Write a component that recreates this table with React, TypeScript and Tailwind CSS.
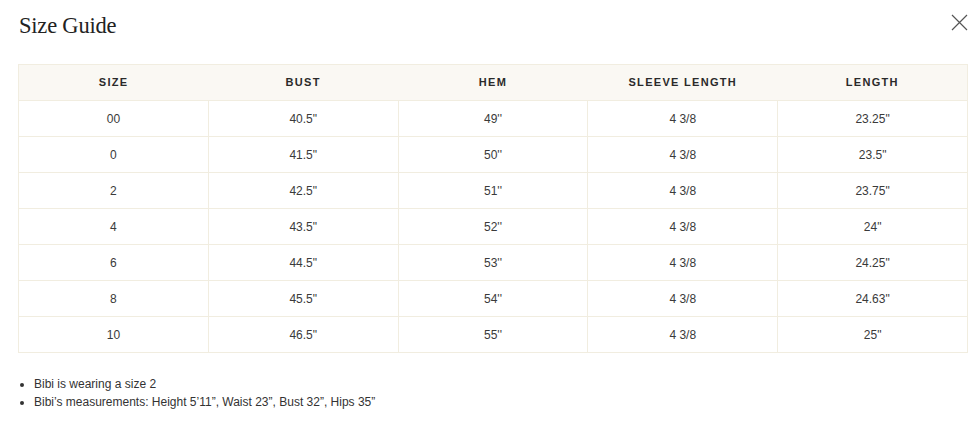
import React from 'react';

const rows: [string, string, string, string, string][] = [
  ['00', '40.5"', '49\'\'', '4 3/8', '23.25"'],
  ['0', '41.5"', '50\'\'', '4 3/8', '23.5"'],
  ['2', '42.5"', '51\'\'', '4 3/8', '23.75"'],
  ['4', '43.5"', '52\'\'', '4 3/8', '24"'],
  ['6', '44.5"', '53\'\'', '4 3/8', '24.25"'],
  ['8', '45.5"', '54\'\'', '4 3/8', '24.63"'],
  ['10', '46.5"', '55\'\'', '4 3/8', '25"'],
];

const headers = ['Size', 'Bust', 'Hem', 'Sleeve Length', 'Length'];

export default function App() {
  return (
    <div className="w-[978px] h-[427px] bg-white px-[18px] pt-[12px] font-['Liberation_Sans',Arial,sans-serif] text-[#333]">
      {/* Title bar */}
      <div className="flex items-start justify-between">
        <h2 className="font-['Liberation_Serif',Georgia,serif] text-[22.5px] leading-[28px] text-[#222] tracking-[-0.2px] pl-[1px]">
          Size Guide
        </h2>
        <button className="mt-[2px] mr-[-8px] text-[#555]" aria-label="Close">
          <svg width="17" height="17" viewBox="0 0 17 17" fill="none" stroke="currentColor" strokeWidth="1.2">
            <path d="M1 1 L16 16 M16 1 L1 16" />
          </svg>
        </button>
      </div>

      {/* Table */}
      <table className="mt-[24px] w-[950px] border-collapse table-fixed border border-[#f1ede0]">
        <thead>
          <tr className="bg-[#faf8f3] h-[36px]">
            {headers.map((h) => (
              <th
                key={h}
                className="text-[11px] font-bold uppercase tracking-[1.3px] text-[#2a2a2a] text-center"
              >
                {h}
              </th>
            ))}
          </tr>
        </thead>
        <tbody>
          {rows.map((r) => (
            <tr key={r[0]} className="h-[36px] border-t border-[#f1ede0]">
              {r.map((c, i) => (
                <td
                  key={i}
                  className={`text-[12px] text-center text-[#3a3a3a] ${i > 0 ? 'border-l border-[#f1ede0]' : ''}`}
                >
                  {c}
                </td>
              ))}
            </tr>
          ))}
        </tbody>
      </table>

      {/* Notes */}
      <ul className="mt-[22px] list-disc pl-[16px] text-[12px] leading-[18px] text-[#333]">
        <li>Bibi is wearing a size 2</li>
        <li>Bibi’s measurements: Height 5’11”, Waist 23”, Bust 32”, Hips 35”</li>
      </ul>
    </div>
  );
}
